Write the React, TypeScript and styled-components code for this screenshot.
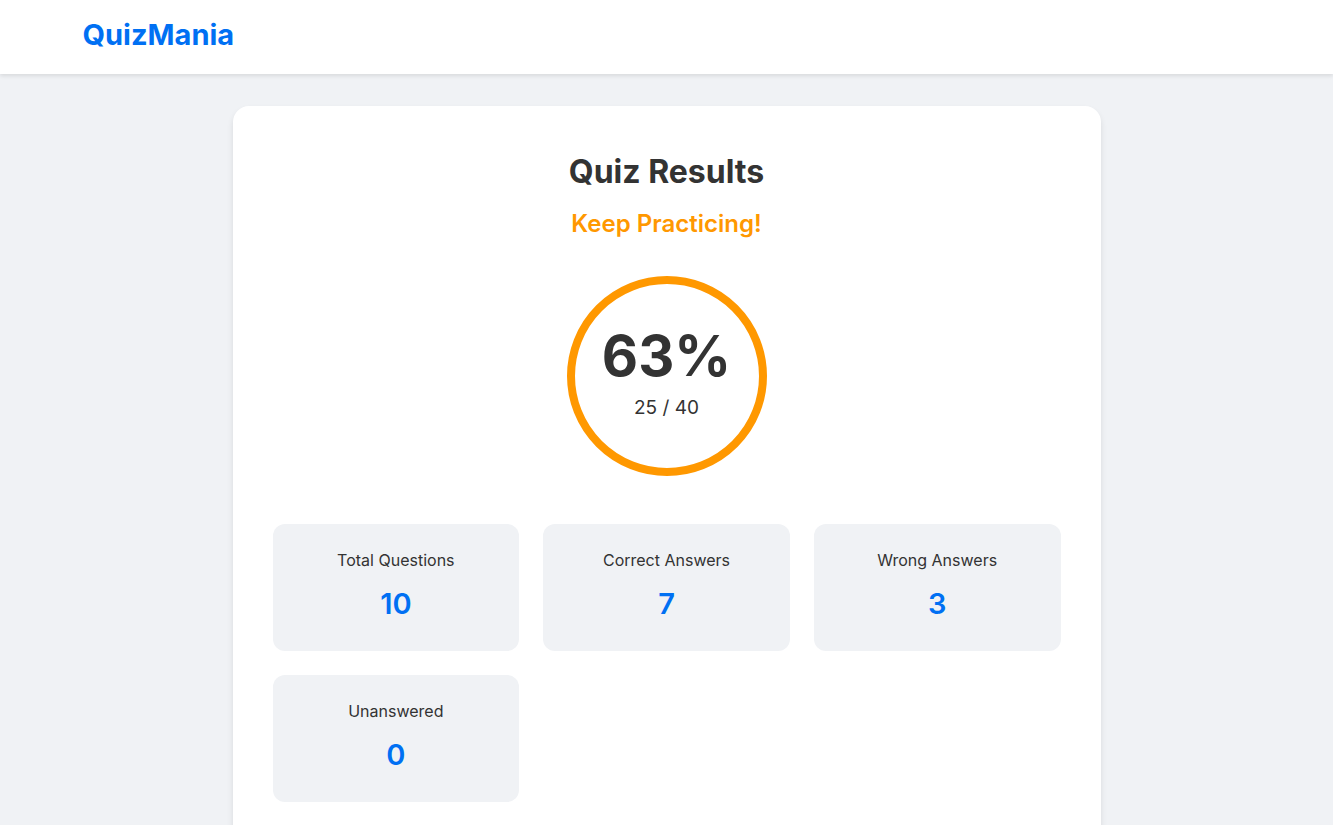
import React from "react";
import styled, { createGlobalStyle } from "styled-components";

const GlobalStyle = createGlobalStyle`
  * { box-sizing: border-box; margin: 0; padding: 0; }
  body {
    margin: 0;
    background: #f0f2f5;
    color: #333333;
    font-family: Inter, sans-serif;
    font-size: 16px;
    line-height: 25px;
  }
`;

const Header = styled.header`
  background: #ffffff;
  padding: 12px 0 16px;
  box-shadow: 0 2px 4px rgba(0, 0, 0, 0.1);
`;

const HeaderInner = styled.div`
  max-width: 1200px;
  margin: 0 auto;
  padding: 0 16px;
`;

const Logo = styled.a`
  display: inline-block;
  color: #0070f3;
  font-size: 29px;
  font-weight: 700;
  line-height: 46px;
  text-decoration: none;
`;

const Main = styled.main`
  max-width: 900px;
  margin: 0 auto;
  padding: 32px 16px;
`;

const Card = styled.section`
  background: #ffffff;
  border-radius: 16px;
  padding: 40px;
  box-shadow: 0 4px 6px rgba(0, 0, 0, 0.1);
`;

const Summary = styled.div`
  display: flex;
  flex-direction: column;
  align-items: center;
  margin-bottom: 48px;
  text-align: center;
`;

const Title = styled.h1`
  font-size: 32px;
  font-weight: 700;
  line-height: 52px;
  margin-bottom: 8px;
`;

const Message = styled.p`
  color: #ff9800;
  font-size: 24px;
  font-weight: 600;
  line-height: 36px;
  margin-bottom: 34px;
`;

const ScoreCircle = styled.div`
  width: 200px;
  height: 200px;
  border: 8px solid #ff9800;
  border-radius: 50%;
  display: flex;
  flex-direction: column;
  align-items: center;
  justify-content: center;
`;

const Percentage = styled.div`
  font-size: 56px;
  font-weight: 700;
  line-height: 56px;
  margin-bottom: 8px;
`;

const Score = styled.div`
  font-size: 19px;
  line-height: 32px;
`;

const Stats = styled.dl`
  display: grid;
  grid-template-columns: repeat(auto-fit, minmax(200px, 1fr));
  gap: 24px;
`;

const Stat = styled.div`
  background: #f0f2f5;
  border-radius: 12px;
  padding: 24px;
  text-align: center;
`;

const StatLabel = styled.dt`
  margin-bottom: 8px;
`;

const StatValue = styled.dd`
  color: #0070f3;
  font-size: 29px;
  font-weight: 600;
  line-height: 46px;
`;

const stats = [
  { label: "Total Questions", value: 10 },
  { label: "Correct Answers", value: 7 },
  { label: "Wrong Answers", value: 3 },
  { label: "Unanswered", value: 0 },
];

export default function App() {
  return (
    <>
      <GlobalStyle />
      <Header>
        <HeaderInner>
          <Logo href="#">QuizMania</Logo>
        </HeaderInner>
      </Header>
      <Main>
        <Card>
          <Summary>
            <Title>Quiz Results</Title>
            <Message>Keep Practicing!</Message>
            <ScoreCircle>
              <Percentage>63%</Percentage>
              <Score>25 / 40</Score>
            </ScoreCircle>
          </Summary>
          <Stats>
            {stats.map((stat) => (
              <Stat key={stat.label}>
                <StatLabel>{stat.label}</StatLabel>
                <StatValue>{stat.value}</StatValue>
              </Stat>
            ))}
          </Stats>
        </Card>
      </Main>
    </>
  );
}
